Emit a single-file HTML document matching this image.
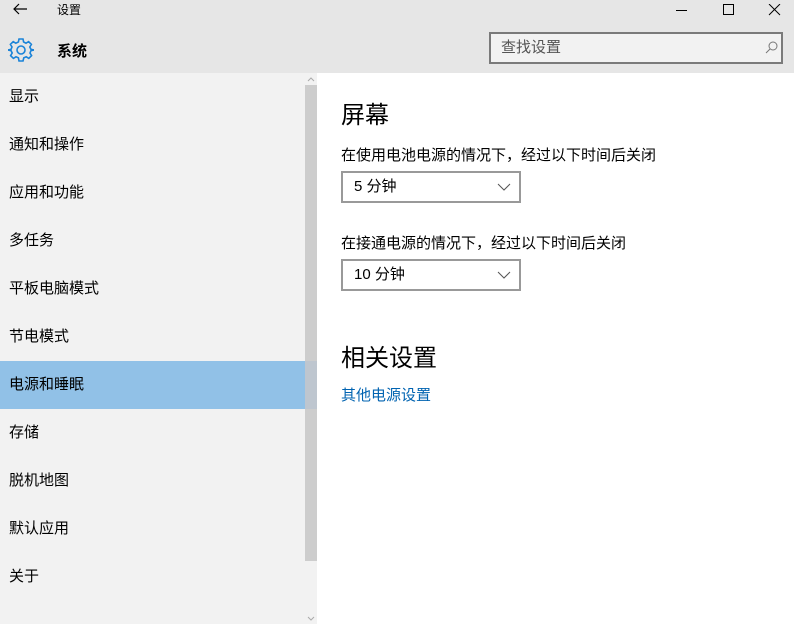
<!DOCTYPE html><html><head><meta charset="utf-8"><style>
*{margin:0;padding:0;box-sizing:border-box}
body{width:794px;height:624px;overflow:hidden;background:#fff;font-family:"Liberation Sans","Noto Sans CJK SC",sans-serif;color:#000;position:relative}
.hdr{position:absolute;left:0;top:0;width:794px;height:73px;background:#e6e6e6}
.abs{position:absolute}
.side{position:absolute;left:0;top:73px;width:317px;height:551px;background:#f2f2f2}
.item{position:absolute;left:0;width:305px;height:48px;line-height:48px;padding-left:9px;font-size:15px}
.sel{background:#91c1e7}
.dd{position:absolute;left:341px;width:180px;height:32px;border:2px solid #999;font-size:15px;line-height:28px;padding-left:11px}
.dd svg{position:absolute;right:8px;top:10px}
</style></head><body>
<div class="hdr"></div>
<svg class="abs" style="left:12px;top:2px" width="16" height="14"><path d="M15 7H2M7 2L2 7l5 5" stroke="#000" stroke-width="1.2" fill="none"/></svg>
<div class="abs" style="left:57px;top:1px;font-size:12px">设置</div>
<svg class="abs" style="left:676px;top:4px" width="110" height="12"><path d="M0 6.5h11" stroke="#000"/><rect x="47.5" y="0.5" width="10" height="10" stroke="#000" fill="none"/><path d="M93 0l11 11M104 0L93 11" stroke="#000"/></svg>
<svg class="abs" style="left:8px;top:37px" width="26" height="26" viewBox="0 0 26 26"><g fill="none" stroke="#1a83d8" stroke-width="1.6"><circle cx="13" cy="13" r="4"/><path d="M11 2h4l.6 3 2.4 1.2 2.6-1.6 2.8 2.8-1.6 2.6L23 12.4l3 .6v0l-3 .6-1 2.4 1.6 2.6-2.8 2.8-2.6-1.6-2.4 1L15 24h-4l-.6-3.2-2.4-1-2.6 1.6-2.8-2.8 1.6-2.6L3 13.6 0 13l3-.6 1-2.4-1.6-2.6 2.8-2.8L7.8 6.2 10.4 5z"/></g></svg>
<div class="abs" style="left:57px;top:40px;font-size:15px;font-weight:bold">系统</div>
<div class="abs" style="left:489px;top:32px;width:294px;height:32px;border:2px solid #7a7a7a;background:#f2f2f2;font-size:15px;line-height:28px;padding-left:10px;color:#555">查找设置</div>
<svg class="abs" style="left:765px;top:41px" width="13" height="13"><circle cx="8" cy="5" r="4" stroke="#777" fill="none"/><path d="M5 8L1 12" stroke="#777"/></svg>
<div class="side"></div>
<div class="abs" style="left:305px;top:85px;width:12px;height:476px;background:#cdcdcd"></div>
<svg class="abs" style="left:306px;top:76px" width="10" height="6"><path d="M2 5l3-3 3 3" stroke="#aaa" fill="none"/></svg>
<svg class="abs" style="left:306px;top:616px" width="10" height="6"><path d="M2 1l3 3 3-3" stroke="#aaa" fill="none"/></svg>
<div class="item" style="top:73px">显示</div>
<div class="item" style="top:121px">通知和操作</div>
<div class="item" style="top:169px">应用和功能</div>
<div class="item" style="top:217px">多任务</div>
<div class="item" style="top:265px">平板电脑模式</div>
<div class="item" style="top:313px">节电模式</div>
<div class="item sel" style="top:361px">电源和睡眠</div>
<div class="abs" style="left:305px;top:361px;width:12px;height:48px;background:#bec6cf"></div>
<div class="item" style="top:409px">存储</div>
<div class="item" style="top:457px">脱机地图</div>
<div class="item" style="top:505px">默认应用</div>
<div class="item" style="top:553px">关于</div>
<div class="abs" style="left:341px;top:95px;font-size:24px">屏幕</div>
<div class="abs" style="left:341px;top:144px;font-size:15px">在使用电池电源的情况下，经过以下时间后关闭</div>
<div class="dd" style="top:171px">5 分钟<svg width="14" height="8"><path d="M1 1l6 6 6-6" stroke="#555" fill="none"/></svg></div>
<div class="abs" style="left:341px;top:232px;font-size:15px">在接通电源的情况下，经过以下时间后关闭</div>
<div class="dd" style="top:259px">10 分钟<svg width="14" height="8"><path d="M1 1l6 6 6-6" stroke="#555" fill="none"/></svg></div>
<div class="abs" style="left:341px;top:338px;font-size:24px">相关设置</div>
<div class="abs" style="left:341px;top:384px;font-size:15px;color:#0063b1">其他电源设置</div>
</body></html>
